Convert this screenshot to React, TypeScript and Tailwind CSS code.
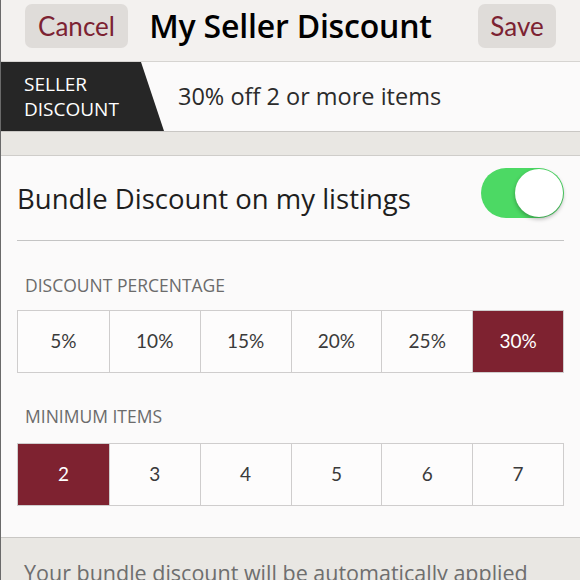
import React from "react";

const pcts = ["5%", "10%", "15%", "20%", "25%", "30%"];
const items = ["2", "3", "4", "5", "6", "7"];

const lato = { fontFamily: "Lato, 'Open Sans', sans-serif" };

function Seg({ values, selected }: { values: string[]; selected: string }) {
  return (
    <div className="grid grid-cols-6 h-[63px] border border-[#cfcdcd] bg-[#fdfcfc]" style={lato}>
      {values.map((v, i) => (
        <div
          key={v}
          className={
            "flex items-center justify-center text-[19px] " +
            (i > 0 ? "border-l border-[#cfcdcd] " : "") +
            (v === selected ? "bg-[#7e2230] text-white" : "text-[#3a3a3a]")
          }
        >
          {v}
        </div>
      ))}
    </div>
  );
}

export default function App() {
  return (
    <div
      className="w-[580px] h-[580px] overflow-hidden bg-[#e9e7e3] border-l border-[#6a6a6a]"
      style={{ fontFamily: "'Open Sans', Lato, sans-serif" }}
    >
      <div className="h-[62px] bg-[#f3f1ef] grid grid-cols-[1fr_auto_1fr] items-start pt-[4px] pl-[24px] pr-[24px] border-b border-[#d6d4d1]">
        <div className="flex">
          <div
            className="w-[103px] h-[44px] rounded-[7px] bg-[#dfdcd9] flex items-center justify-center text-[26px] text-[#7c2232]"
            style={lato}
          >
            Cancel
          </div>
        </div>
        <div className="h-[44px] flex items-center text-[32px] font-semibold text-black px-[4px] tracking-[-0.2px]">
          My Seller Discount
        </div>
        <div className="flex justify-end">
          <div
            className="w-[78px] h-[44px] rounded-[7px] bg-[#dfdcd9] flex items-center justify-center text-[26px] text-[#7c2232]"
            style={lato}
          >
            Save
          </div>
        </div>
      </div>

      <div className="h-[69px] bg-[#fbfafa] flex items-center">
        <div className="h-full w-[163px] bg-[#262626] [clip-path:polygon(0_0,140px_0,163px_100%,0_100%)] flex flex-col justify-center pl-[23px] text-white text-[19px] leading-[25px]">
          <div>SELLER</div>
          <div>DISCOUNT</div>
        </div>
        <div className="ml-[14px] text-[23.5px] text-[#2b2b2b]">30% off 2 or more items</div>
      </div>

      <div className="h-[24px] border-t border-[#c9c7c4] bg-[#e9e7e3]" />

      <div className="bg-[#fbfafa] border-t border-[#cfcdca] border-b border-b-[#c9c7c4] px-[16px] pb-[31px]">
        <div className="h-[85px] flex justify-between border-b border-[#c4c4c4]">
          <div className="self-center mt-[2px] text-[27.5px] text-[#1e1e1e] whitespace-nowrap">Bundle Discount on my listings</div>
          <div className="mt-[12px] w-[83px] h-[50px] rounded-full bg-[#4cd964] flex items-center justify-end pr-[1px]">
            <div className="w-[48px] h-[48px] rounded-full bg-white shadow-[0_2px_4px_rgba(0,0,0,0.3)]" />
          </div>
        </div>
        <div className="mt-[32px] pl-[8px] leading-[24px] text-[17.5px] text-[#6b6b6b]">DISCOUNT PERCENTAGE</div>
        <div className="mt-[13px]">
          <Seg values={pcts} selected="30%" />
        </div>
        <div className="mt-[31px] pl-[8px] leading-[24px] text-[17.5px] text-[#6b6b6b]">MINIMUM ITEMS</div>
        <div className="mt-[15px]">
          <Seg values={items} selected="2" />
        </div>
      </div>

      <div className="pt-[21px] pl-[23px] text-[21.5px] leading-[28px] text-[#6e6e6e] whitespace-nowrap">
        Your bundle discount will be automatically applied
      </div>
    </div>
  );
}
